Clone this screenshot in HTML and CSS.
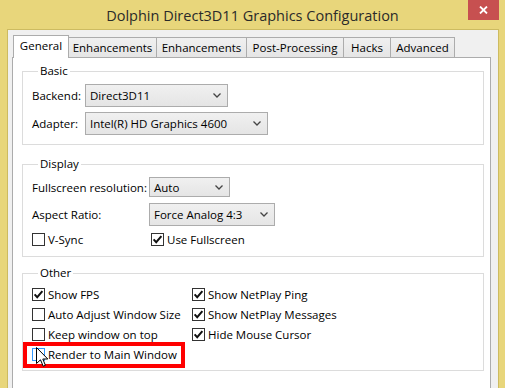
FILE: index.html
```html
<!DOCTYPE html>
<html>
<head>
<meta charset="utf-8">
<link rel="stylesheet" href="styles.css">
</head>
<body>
<div class="window">
  <div class="titlebar">
    <span class="title">Dolphin Direct3D11 Graphics Configuration</span>
    <div class="close-btn"><svg width="9" height="8" viewBox="0 0 9 8"><path d="M1 0.5 L8 7.5 M8 0.5 L1 7.5" stroke="#fff" stroke-width="1.8" fill="none"/></svg></div>
  </div>
  <div class="client">
    <div class="tabs">
      <div class="tab tab-active tab-general">General</div>
      <div class="tab tab-enh1">Enhancements</div>
      <div class="tab tab-enh2">Enhancements</div>
      <div class="tab tab-post">Post-Processing</div>
      <div class="tab tab-hacks">Hacks</div>
      <div class="tab tab-adv">Advanced</div>
    </div>
    <div class="panel">
      <fieldset class="group group-basic">
        <legend>Basic</legend>
        <div class="form form-basic">
          <span class="label">Backend:</span>
          <div class="combo combo-backend"><span>Direct3D11</span><svg class="chev" width="8" height="5" viewBox="0 0 8 5"><path d="M0.5 0.5 L4 4 L7.5 0.5" stroke="#444" stroke-width="1.3" fill="none"/></svg></div>
          <span class="label">Adapter:</span>
          <div class="combo combo-adapter"><span>Intel(R) HD Graphics 4600</span><svg class="chev" width="8" height="5" viewBox="0 0 8 5"><path d="M0.5 0.5 L4 4 L7.5 0.5" stroke="#444" stroke-width="1.3" fill="none"/></svg></div>
        </div>
      </fieldset>
      <fieldset class="group group-display">
        <legend>Display</legend>
        <div class="form form-display">
          <span class="label">Fullscreen resolution:</span>
          <div class="combo combo-auto"><span>Auto</span><svg class="chev" width="8" height="5" viewBox="0 0 8 5"><path d="M0.5 0.5 L4 4 L7.5 0.5" stroke="#444" stroke-width="1.3" fill="none"/></svg></div>
          <span class="label">Aspect Ratio:</span>
          <div class="combo combo-aspect"><span>Force Analog 4:3</span><svg class="chev" width="8" height="5" viewBox="0 0 8 5"><path d="M0.5 0.5 L4 4 L7.5 0.5" stroke="#444" stroke-width="1.3" fill="none"/></svg></div>
          <label class="check"><span class="box"></span>V-Sync</label>
          <label class="check check-shift"><span class="box"><svg width="11" height="11" viewBox="0 0 11 11"><path d="M1.6 5.4 L4.2 8.2 L9.4 2.2" stroke="#111" stroke-width="2" fill="none"/></svg></span>Use Fullscreen</label>
        </div>
      </fieldset>
      <fieldset class="group group-other">
        <legend>Other</legend>
        <div class="form form-other">
          <label class="check"><span class="box"><svg width="11" height="11" viewBox="0 0 11 11"><path d="M1.6 5.4 L4.2 8.2 L9.4 2.2" stroke="#111" stroke-width="2" fill="none"/></svg></span>Show FPS</label>
          <label class="check"><span class="box"><svg width="11" height="11" viewBox="0 0 11 11"><path d="M1.6 5.4 L4.2 8.2 L9.4 2.2" stroke="#111" stroke-width="2" fill="none"/></svg></span>Show NetPlay Ping</label>
          <label class="check"><span class="box"></span>Auto Adjust Window Size</label>
          <label class="check"><span class="box"><svg width="11" height="11" viewBox="0 0 11 11"><path d="M1.6 5.4 L4.2 8.2 L9.4 2.2" stroke="#111" stroke-width="2" fill="none"/></svg></span>Show NetPlay Messages</label>
          <label class="check"><span class="box"></span>Keep window on top</label>
          <label class="check"><span class="box"><svg width="11" height="11" viewBox="0 0 11 11"><path d="M1.6 5.4 L4.2 8.2 L9.4 2.2" stroke="#111" stroke-width="2" fill="none"/></svg></span>Hide Mouse Cursor</label>
          <label class="check check-render"><span class="box box-hover"></span>Render to Main Window
            <span class="highlight"></span>
            <svg class="cursor" width="13" height="21" viewBox="0 0 13 21"><path d="M0.5 0.5 L0.5 16.5 L4.5 12.8 L7.2 19.2 L9.4 18.3 L6.8 12 L11.8 12 Z" fill="#fff" stroke="#000" stroke-width="1" stroke-linejoin="miter"/></svg>
          </label>
        </div>
      </fieldset>
    </div>
  </div>
</div>
</body>
</html>
```

FILE: styles.css
```css
* { box-sizing: border-box; }
html, body {
  margin: 0;
  padding: 0;
  width: 505px;
  height: 388px;
  overflow: hidden;
  background: #e8d67b;
}
.window {
  width: 505px;
  height: 388px;
  display: flex;
  flex-direction: column;
  background: #e8d67b;
  font-family: "Open Sans", "Noto Sans", sans-serif;
  font-size: 11.5px;
  color: #000;
}
.titlebar {
  height: 29px;
  flex: none;
  position: relative;
  display: flex;
  align-items: center;
  justify-content: center;
}
.title {
  font-size: 14.5px;
  color: #2a2a2a;
  padding-top: 1px;
}
.close-btn {
  position: absolute;
  top: 0;
  left: 468px;
  width: 31px;
  height: 20px;
  background: #c75050;
  display: flex;
  align-items: center;
  justify-content: center;
}
.client {
  flex: 1;
  margin: 0 6px 0 7px;
  border: 1px solid #cdbb61;
  border-bottom: none;
  background: #f0f0f0;
  padding: 5px 7px 0 4px;
  display: flex;
  flex-direction: column;
}
.tabs {
  display: flex;
  height: 23px;
  margin-left: 1px;
  flex: none;
  position: relative;
  z-index: 1;
}
.tab {
  height: 20px;
  margin-top: 2px;
  border: 1px solid #acacac;
  border-bottom: none;
  background: linear-gradient(#f0f0f0, #e5e5e5);
  margin-left: -1px;
  display: flex;
  align-items: center;
  justify-content: center;
  line-height: 16px;
  padding-top: 1px;
  white-space: nowrap;
}
.tab-active {
  height: 23px;
  margin-top: 0;
  margin-left: 0;
  background: #fff;
  padding-top: 0;
  padding-bottom: 2px;
}
.tab-general { width: 56px; }
.tab-enh1 { width: 89px; }
.tab-enh2 { width: 91px; }
.tab-post { width: 98px; }
.tab-hacks { width: 48px; }
.tab-adv { width: 65px; }
.panel {
  flex: 1;
  margin-top: -1px;
  background: #fff;
  border: 1px solid #acacac;
  border-bottom: none;
  padding: 5px 6px 0 9px;
}
.group {
  margin: 0;
  border: 1px solid #dcdcdc;
  padding: 5px 9px 9px 9px;
  min-width: 0;
}
.group legend {
  margin-left: 6px;
  padding: 0 2px;
  line-height: 16px;
}
.group-display { margin-top: 11px; }
.group-other { margin-top: 8px; padding-top: 3px; padding-bottom: 6px; }
.form {
  display: grid;
  align-items: center;
}
.form-basic {
  grid-template-columns: 53px auto;
  row-gap: 5px;
  justify-items: start;
}
.form-display {
  grid-template-columns: 117px auto;
  grid-template-rows: 20px 23px 15px;
  row-gap: 6px;
  justify-items: start;
}
.form-other {
  grid-template-columns: 160px auto;
  grid-auto-rows: 20px;
  justify-items: start;
}
.label { white-space: nowrap; }
.combo {
  height: 23px;
  border: 1px solid #acacac;
  background: linear-gradient(#f0f0f0, #e5e5e5);
  display: flex;
  align-items: center;
  justify-content: space-between;
  padding: 0 6px 0 4px;
  white-space: nowrap;
}
.combo-backend { width: 143px; }
.combo-adapter { width: 183px; }
.combo-auto { width: 81px; height: 20px; }
.combo-aspect { width: 126px; }
.chev { flex: none; }
.check {
  display: flex;
  align-items: center;
  white-space: nowrap;
  height: 20px;
}
.check-shift { margin-left: 2px; }
.box {
  width: 13px;
  height: 13px;
  border: 1px solid #333;
  background: #fff;
  margin-right: 3px;
  flex: none;
  display: flex;
  align-items: center;
  justify-content: center;
}
.box-hover { border-color: #3399ff; }
.check-render { position: relative; }
.highlight {
  position: absolute;
  left: -9px;
  top: -2px;
  width: 162px;
  height: 26px;
  border: 4px solid #ff0000;
}
.cursor {
  position: absolute;
  left: 4px;
  top: 3px;
}
```
